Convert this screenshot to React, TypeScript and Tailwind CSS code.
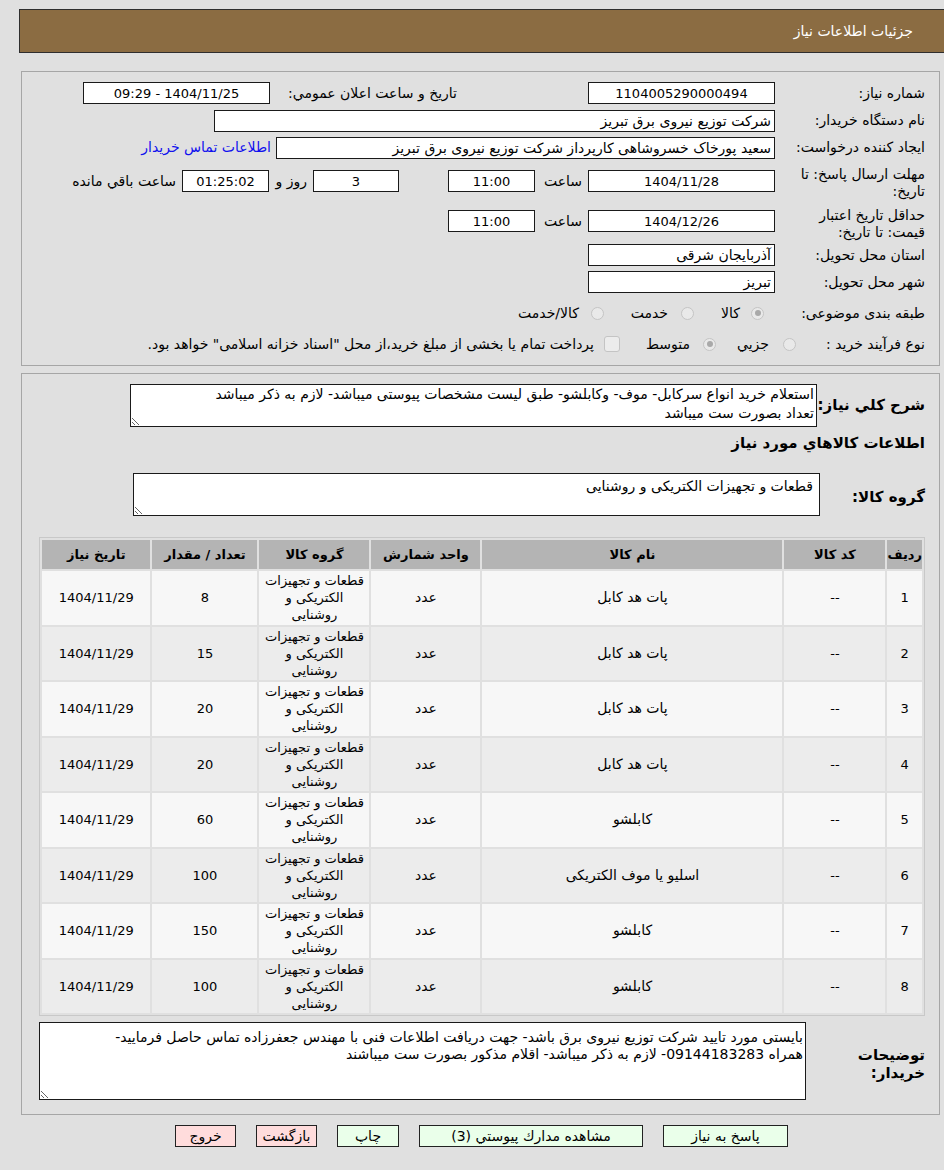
import type { ReactNode } from "react";

type Item = { row: number; code: string; name: string; unit: string; qty: string; date: string };

const items: Item[] = [
  { row: 1, code: "--", name: "پات هد کابل", unit: "عدد", qty: "8", date: "1404/11/29" },
  { row: 2, code: "--", name: "پات هد کابل", unit: "عدد", qty: "15", date: "1404/11/29" },
  { row: 3, code: "--", name: "پات هد کابل", unit: "عدد", qty: "20", date: "1404/11/29" },
  { row: 4, code: "--", name: "پات هد کابل", unit: "عدد", qty: "20", date: "1404/11/29" },
  { row: 5, code: "--", name: "کابلشو", unit: "عدد", qty: "60", date: "1404/11/29" },
  { row: 6, code: "--", name: "اسلیو یا موف الکتریکی", unit: "عدد", qty: "100", date: "1404/11/29" },
  { row: 7, code: "--", name: "کابلشو", unit: "عدد", qty: "150", date: "1404/11/29" },
  { row: 8, code: "--", name: "کابلشو", unit: "عدد", qty: "100", date: "1404/11/29" },
];

// read-only field box; numeric values are centred and one size smaller
function Box({ children, num = false, className = "" }: { children?: ReactNode; num?: boolean; className?: string }) {
  return (
    <div
      className={`flex h-[22px] shrink-0 items-center overflow-hidden border border-[#1a1a1a] bg-white px-[3px] leading-none text-black ${
        num ? "justify-center text-[13px]" : "text-[14px]"
      } ${className}`}
    >
      {children}
    </div>
  );
}

function Radio({ checked = false }: { checked?: boolean }) {
  return (
    <span className="flex h-[13px] w-[13px] shrink-0 items-center justify-center rounded-full border border-[#c4c4c4] bg-[#e9e9e9]">
      {checked && <span className="h-[6px] w-[6px] rounded-full bg-[#a9a9a9]" />}
    </span>
  );
}

function Label({ children, className = "" }: { children: ReactNode; className?: string }) {
  return <div className={`w-[150px] shrink-0 text-[14px] leading-[17px] text-black ${className}`}>{children}</div>;
}

export default function App() {
  return (
    <div dir="rtl" className="min-h-[1170px] overflow-hidden bg-[#e0e0e0] pl-[19px] font-['DejaVu_Sans',sans-serif] text-[14px] text-black">
      {/* page title bar */}
      <div className="mt-[9px] -mr-[20px] flex h-[44px] items-center border border-[#2e2e2e] bg-[#8b6c42] pr-[50px]">
        <h1 className="text-[14px] font-normal text-white">جزئیات اطلاعات نیاز</h1>
      </div>

      {/* tender details */}
      <section className="mt-[18px] ml-[2px] mr-[4px] border border-[#a6a6a6] pb-[10px] pr-[14px] pt-[10px]">
        <div className="flex h-[22px] items-center">
          <Label>شماره نیاز:</Label>
          <Box num className="w-[187px]">1104005290000494</Box>
          <span className="mr-[131px] w-[182px] shrink-0">تاریخ و ساعت اعلان عمومي:</span>
          <Box num className="mr-[5px] w-[187px]">1404/11/25 - 09:29</Box>
        </div>

        <div className="mt-[6px] flex h-[21px] items-center">
          <Label>نام دستگاه خریدار:</Label>
          <Box className="h-[21px] w-[561px]">شرکت توزیع نیروی برق تبریز</Box>
        </div>

        <div className="mt-[6px] flex h-[21px] items-center">
          <Label>ایجاد کننده درخواست:</Label>
          <Box className="h-[21px] w-[499px]">سعید پورخاک خسروشاهی کارپرداز شرکت توزیع نیروی برق تبریز</Box>
          <a className="mr-[5px] text-[#1010ee]" href="#">اطلاعات تماس خریدار</a>
        </div>

        <div className="mt-[8px] flex items-start">
          <Label>
            مهلت ارسال پاسخ: تا
            <br />
            تاریخ:
          </Label>
          <div className="mt-[4px] flex items-center">
            <Box num className="w-[187px]">1404/11/28</Box>
            <span className="mr-[6px] w-[41px] shrink-0">ساعت</span>
            <Box num className="mr-[6px] w-[87px]">11:00</Box>
            <Box num className="mr-[49px] w-[86px]">3</Box>
            <span className="mr-[6px] w-[35px] shrink-0">روز و</span>
            <Box num className="mr-[3px] w-[87px] bg-[#efefd0]">01:25:02</Box>
            <span className="mr-[6px] shrink-0">ساعت باقي مانده</span>
          </div>
        </div>

        <div className="mt-[7px] flex items-start">
          <Label>
            حداقل تاریخ اعتبار
            <br />
            قیمت: تا تاریخ:
          </Label>
          <div className="mt-[3px] flex items-center">
            <Box num className="w-[187px]">1404/12/26</Box>
            <span className="mr-[6px] w-[41px] shrink-0">ساعت</span>
            <Box num className="mr-[6px] w-[87px]">11:00</Box>
          </div>
        </div>

        <div className="mt-[3px] flex h-[22px] items-center">
          <Label>استان محل تحویل:</Label>
          <Box className="w-[187px]">آذربایجان شرقی</Box>
        </div>

        <div className="mt-[5px] flex h-[22px] items-center">
          <Label>شهر محل تحویل:</Label>
          <Box className="w-[187px]">تبریز</Box>
        </div>

        <div className="mt-[9px] flex h-[22px] items-center">
          <Label>طبقه بندی موضوعی:</Label>
          <span className="mr-[11px] flex w-[70px] shrink-0 items-center gap-[11px]"><Radio checked /><span>کالا</span></span>
          <span className="flex w-[90px] shrink-0 items-center gap-[13px]"><Radio /><span>خدمت</span></span>
          <span className="flex items-center gap-[12px]"><Radio /><span>کالا/خدمت</span></span>
        </div>

        <div className="mt-[9px] flex h-[22px] items-center">
          <Label>نوع فرآیند خرید :</Label>
          <span className="mr-[-21px] flex w-[80px] shrink-0 items-center gap-[14px]"><Radio /><span>جزيي</span></span>
          <span className="flex w-[96px] shrink-0 items-center gap-[13px]"><Radio checked /><span>متوسط</span></span>
          <span className="flex items-center gap-[10px]">
            <span className="h-[16px] w-[16px] shrink-0 rounded-[3px] border border-[#c4c4c4] bg-[#ececec]" />
            <span>پرداخت تمام یا بخشی از مبلغ خرید،از محل "اسناد خزانه اسلامی" خواهد بود.</span>
          </span>
        </div>
      </section>

      {/* description, goods and buyer notes */}
      <section className="mt-[7px] ml-[2px] mr-[4px] border border-[#a6a6a6] pb-[14px] pl-[17px] pr-[14px] pt-[10px]">
        <div className="flex items-center">
          <div className="w-[108px] shrink-0 text-[15px] font-bold">شرح كلي نياز:</div>
          <textarea
            readOnly
            value={"استعلام خرید انواع سرکابل- موف- وکابلشو- طبق لیست مشخصات پیوستی میباشد- لازم به ذکر میباشد\nتعداد بصورت ست میباشد"}
            className="h-[43px] w-[687px] overflow-hidden border border-[#1a1a1a] bg-white px-[2px] py-0 text-[14px] leading-[19px] text-black"
          />
        </div>

        <h2 className="mt-[6px] h-[20px] text-[15px] font-bold leading-[20px]">اطلاعات كالاهاي مورد نياز</h2>

        <div className="mt-[20px] flex items-center">
          <div className="w-[105px] shrink-0 pt-[6px] text-[15px] font-bold">گروه کالا:</div>
          <textarea
            readOnly
            value="قطعات و تجهیزات الکتریکی و روشنایی"
            className="h-[43px] w-[687px] overflow-hidden border border-[#1a1a1a] bg-white px-[6px] py-[4px] text-[14px] leading-[17px] text-black"
          />
        </div>

        <div className="mt-[21px] border border-[#c8c8c8]">
          <table className="w-full border-separate border-spacing-[2px] text-center text-[13px]">
            <thead>
              <tr className="h-[29px] bg-[#b4b4b4] text-[13px] font-bold">
                <th className="w-[33px]">رديف</th>
                <th className="w-[101px]">کد کالا</th>
                <th className="w-[300px]">نام کالا</th>
                <th className="w-[109px]">واحد شمارش</th>
                <th className="w-[110px]">گروه کالا</th>
                <th className="w-[105px]">تعداد / مقدار</th>
                <th>تاریخ نیاز</th>
              </tr>
            </thead>
            <tbody>
              {items.map((it) => (
                <tr key={it.row} className={`h-[53.5px] ${it.row % 2 === 1 ? "bg-[#f7f7f7]" : "bg-[#ececec]"}`}>
                  <td>{it.row}</td>
                  <td>{it.code}</td>
                  <td className="text-[14px]">{it.name}</td>
                  <td className="text-[14px]">{it.unit}</td>
                  <td className="px-[3px] py-0 leading-[17px]">قطعات و تجهیزات الکتریکی و روشنایی</td>
                  <td>{it.qty}</td>
                  <td>{it.date}</td>
                </tr>
              ))}
            </tbody>
          </table>
        </div>

        <div className="mt-[6px] flex items-center">
          <div className="w-[119px] shrink-0 pt-[6px] text-[15px] font-bold leading-[18px]">
            توضیحات
            <br />
            خریدار:
          </div>
          <textarea
            readOnly
            value={"بایستی مورد تایید شرکت توزیع نیروی برق باشد- جهت دریافت اطلاعات فنی با مهندس جعفرزاده تماس حاصل فرمایید-\nهمراه 09144183283- لازم به ذکر میباشد- اقلام مذکور بصورت ست میباشند"}
            className="h-[78px] w-[769px] overflow-hidden border border-[#1a1a1a] bg-white px-[2px] pb-[4px] pt-[6px] text-[14px] leading-[17px] text-black"
          />
        </div>
      </section>

      {/* actions */}
      <div className="mt-[10px] flex justify-center gap-[20px]">
        <button className="h-[22px] w-[125px] border border-[#222] bg-[#eaffea]">پاسخ به نیاز</button>
        <button className="h-[22px] w-[224px] border border-[#222] bg-[#eaffea]">مشاهده مدارك پیوستي (3)</button>
        <button className="h-[22px] w-[62px] border border-[#222] bg-[#eaffea]">چاپ</button>
        <button className="h-[22px] w-[61px] border border-[#222] bg-[#ffdcdc]">بازگشت</button>
        <button className="h-[22px] w-[61px] border border-[#222] bg-[#ffdcdc]">خروج</button>
      </div>
    </div>
  );
}
